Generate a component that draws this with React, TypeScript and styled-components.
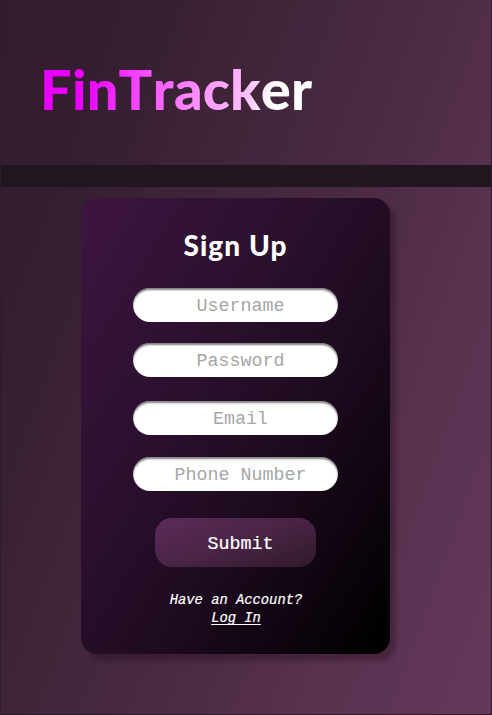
import React from "react";
import styled, { createGlobalStyle } from "styled-components";

const mono = `"Liberation Mono", monospace`;
const display = `Lato, sans-serif`;

const GlobalStyle = createGlobalStyle`
  *, *::before, *::after { box-sizing: border-box; }
  body { margin: 0; background: #2b1a2b; }
`;

const Page = styled.div`
  height: 715px;
  width: 492px;
  overflow: hidden;
  display: flex;
  flex-direction: column;
  border: solid #2b1c2f;
  border-width: 0 1px 1px;
  background: linear-gradient(110deg, #331c2c 0%, #351f30 20%, #402539 37%, #4d2b46 60%, #58324f 75%, #64385b 100%);
`;

const Header = styled.header`
  height: 165px;
  flex: none;
  padding: 54px 0 0 39px;
`;

const Brand = styled.h1`
  width: max-content;
  margin: 0;
  font: 900 56px/70px ${display};
  font-kerning: none;
  letter-spacing: 0.2px;
  color: transparent;
  background: linear-gradient(100deg, #ea00ff 18%, #f64fff 39%, #ff92ff 59%, #ffbcff 75%, #fff 84%);
  background-clip: text;
`;

const Divider = styled.div`
  height: 22px;
  flex: none;
  background: #211520;
`;

const Card = styled.form`
  width: 309px;
  height: 456px;
  flex: none;
  margin: 11px 0 0 80px;
  padding: 31px 1px 0 0;
  display: flex;
  flex-direction: column;
  align-items: center;
  border-radius: 16px;
  background: linear-gradient(122deg, #3b143f 5%, #2b102e 36%, #1e0b20 60%, #0d040e 82%, #000 97%);
  box-shadow: 6px 7px 4px rgba(40, 14, 38, 0.4);
`;

const Heading = styled.h2`
  margin: 0 0 27px;
  font: 900 28px/32px ${display};
  letter-spacing: 1.1px;
  text-indent: 1.1px;
  color: #fff;
`;

const Field = styled.input<{ $after: number }>`
  width: 205px;
  height: 34px;
  flex: none;
  margin: 0 0 ${(p) => p.$after}px;
  padding: 2px 0 0 11px;
  border: 0;
  border-radius: 17px;
  outline: 0;
  text-align: center;
  font: 18.33px ${mono};
  color: #333;
  background: #fff;
  box-shadow: inset 0 2px 2px rgba(0, 0, 0, 0.5);
  &::placeholder { color: #a6a6a6; opacity: 1; }
`;

const Submit = styled.button`
  width: 161px;
  height: 49px;
  flex: none;
  padding: 4px 0 0 11px;
  border: 0;
  border-radius: 17px;
  font: 18.33px ${mono};
  -webkit-text-stroke: 0.2px currentColor;
  color: #fff;
  background: linear-gradient(160deg, #5a2a58 5%, #4a2445 50%, #301a2b 100%);
`;

const Account = styled.p`
  margin: 25px 0 0;
  padding-left: 2px;
  text-align: center;
  font: italic 13.8px/18px ${mono};
  -webkit-text-stroke: 0.2px currentColor;
  color: #fff;
`;

const LoginLink = styled.a`
  display: block;
  color: inherit;
  text-decoration: underline;
  text-decoration-skip-ink: none;
  text-underline-offset: 2px;
`;

const fields = [
  { label: "Username", type: "text", after: 21 },
  { label: "Password", type: "password", after: 24 },
  { label: "Email", type: "email", after: 22 },
  { label: "Phone Number", type: "tel", after: 27 },
];

export default function App() {
  return (
    <>
      <GlobalStyle />
      <Page>
        <Header>
          <Brand>FinTracker</Brand>
        </Header>
        <Divider />
        <Card onSubmit={(e) => e.preventDefault()}>
          <Heading>Sign Up</Heading>
          {fields.map((f) => (
            <Field key={f.label} type={f.type} placeholder={f.label} aria-label={f.label} $after={f.after} />
          ))}
          <Submit type="submit">Submit</Submit>
          <Account>
            Have an Account?
            <LoginLink href="#">Log In</LoginLink>
          </Account>
        </Card>
      </Page>
    </>
  );
}
